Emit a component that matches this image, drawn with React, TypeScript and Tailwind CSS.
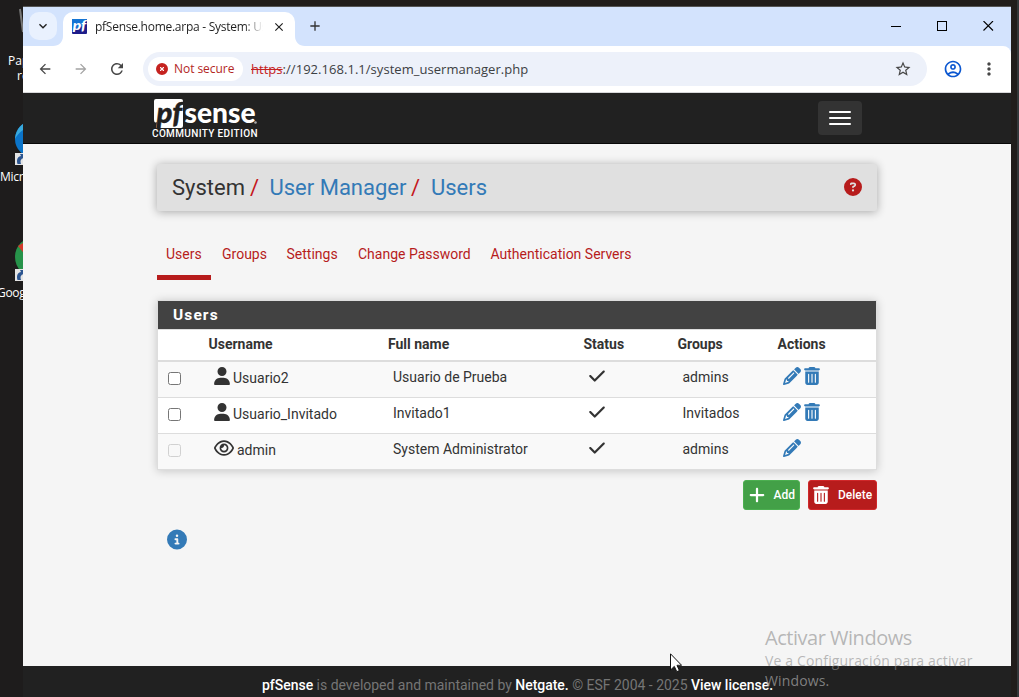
import React from "react";
import {
  FaCheck,
  FaCircleInfo,
  FaCircleQuestion,
  FaCircleXmark,
  FaPencil,
  FaPlus,
  FaRegEye,
  FaTrashCan,
  FaUser,
} from "react-icons/fa6";
import {
  MdAdd,
  MdArrowBack,
  MdArrowForward,
  MdClose,
  MdKeyboardArrowDown,
  MdMoreVert,
  MdOutlineAccountCircle,
  MdRefresh,
  MdStarBorder,
} from "react-icons/md";

type User = {
  username: string;
  fullName: string;
  group: string;
  system?: boolean;
};

const users: User[] = [
  { username: "Usuario2", fullName: "Usuario de Prueba", group: "admins" },
  { username: "Usuario_Invitado", fullName: "Invitado1", group: "Invitados" },
  { username: "admin", fullName: "System Administrator", group: "admins", system: true },
];

function ShortcutBadge() {
  return (
    <svg viewBox="0 0 12 12" className="h-3 w-3">
      <rect width="12" height="12" fill="#e4e4e4" />
      <path d="M2.5 11C1 6 3 3.5 6 3L5 1h6v6L8.5 5C5.5 6 5 8 6 11Z" fill="#2c5590" />
    </svg>
  );
}

function Desktop() {
  return (
    <div className="relative h-full w-[23px] shrink-0 overflow-hidden bg-[#1e1c1c] text-[12px] leading-4 whitespace-nowrap text-white">
      <svg className="absolute top-1 left-[19px]" width="20" height="30" viewBox="0 0 20 30">
        <path d="M1 5 L4 28" stroke="#777" strokeWidth="2" />
        <ellipse cx="17" cy="3" rx="4" ry="2" fill="#555" />
      </svg>
      <span className="absolute top-[53px] left-2">Papelera</span>
      <span className="absolute top-[68px] left-[17px]">reciclaje</span>
      <svg className="absolute top-[121px] left-[15px]" width="36" height="36" viewBox="0 0 36 36">
        <circle cx="18" cy="18" r="18" fill="#0b74c9" />
        <path d="M0 18C1 7 8 0 18 0V6C9 6 3 12 0 18Z" fill="#39a9dc" />
      </svg>
      <div className="absolute top-[153px] left-[15px]"><ShortcutBadge /></div>
      <span className="absolute top-[169px] left-0 tracking-[-0.3px]">Microsoft</span>
      <svg className="absolute top-[237px] left-[15px]" width="40" height="40" viewBox="0 0 40 40">
        <circle cx="20" cy="20" r="20" fill="#27934a" />
        <path d="M3 9L20 -1V30Z" fill="#d33a2c" />
      </svg>
      <div className="absolute top-[269px] left-[15px]"><ShortcutBadge /></div>
      <span className="absolute top-[285px] -left-[3px] tracking-[-0.3px]">Google</span>
    </div>
  );
}

function Favicon() {
  return (
    <svg className="h-[15px] w-[15px] shrink-0" viewBox="0 0 15 15">
      <rect width="15" height="15" rx="1" fill="#1d1d8a" />
      <path d="M0 0H15L11 7L0 11Z" fill="#1475d4" />
      <text x="0.7" y="11" fontFamily="Lato" fontWeight="900" fontStyle="italic" fontSize="12.5" fill="#fff" textLength="13.5" lengthAdjust="spacingAndGlyphs">pf</text>
    </svg>
  );
}

function TabStrip() {
  return (
    <div className="flex h-[39px] bg-[#d3e3fd] pt-[5px] pl-[6px]">
      <div className="flex h-7 w-7 shrink-0 items-center justify-center rounded-[10px] bg-[#e9f1fe]">
        <MdKeyboardArrowDown className="h-4 w-4 text-[#1f1f1f]" />
      </div>
      <svg className="mt-[24px] ml-[-4px] h-[10px] w-[10px] shrink-0" viewBox="0 0 10 10">
        <path d="M10 0V10H0C6 10 10 6 10 0Z" fill="#fff" />
      </svg>
      <div className="flex h-[34px] w-[232px] shrink-0 items-center rounded-t-[10px] bg-white pr-2 pb-[5px] pl-[9px]">
        <Favicon />
        <div className="ml-[8px] w-[168px] overflow-hidden bg-linear-to-r from-[#1f1f1f] from-89% to-transparent bg-clip-text text-[12px] tracking-[-0.26px] whitespace-nowrap text-transparent">
          pfSense.home.arpa - System: User
        </div>
        <MdClose className="ml-[9px] h-[14px] w-[14px] shrink-0 text-[#1f1f1f]" />
      </div>
      <svg className="mt-[24px] h-[10px] w-[10px] shrink-0" viewBox="0 0 10 10">
        <path d="M0 0V10H10C4 10 0 6 0 0Z" fill="#fff" />
      </svg>
      <MdAdd className="mt-[6px] ml-[2px] h-4 w-4 shrink-0 text-[#333]" />
      <div className="ml-auto flex items-start gap-9 pt-[9px] pr-[17px]">
        <svg className="h-[10px] w-[10px]" viewBox="0 0 10 10"><path d="M0 5.5H10" stroke="#000" /></svg>
        <svg className="h-[10px] w-[10px]" viewBox="0 0 10 10"><rect x=".5" y=".5" width="9" height="9" fill="none" stroke="#000" /></svg>
        <svg className="h-[10px] w-[11px]" viewBox="0 0 11 10"><path d="M.5 0L10 9.5M10 0L.5 9.5" stroke="#000" strokeWidth="1.1" /></svg>
      </div>
    </div>
  );
}

function Toolbar() {
  return (
    <div className="bg-[#d3e3fd]">
      <div className="flex h-[47px] items-center rounded-tr-lg border-b border-[#d8d8da] bg-white pl-[14px]">
        <MdArrowBack className="h-4 w-4 text-[#474747]" />
        <MdArrowForward className="ml-5 h-4 w-4 text-[#a3a3a3]" />
        <MdRefresh className="ml-[19px] h-[18px] w-[18px] text-[#474747]" />
        <div className="ml-[17px] flex h-[34px] w-[784px] items-center rounded-full bg-[#edf1fa] pl-[5px]">
          <div className="flex h-6 w-[95px] items-center rounded-full bg-white pl-2">
            <FaCircleXmark className="h-3 w-3 text-[#c5221f]" />
            <span className="ml-[6px] text-[12px] tracking-[-0.05px] whitespace-nowrap text-[#b3261e]">Not secure</span>
          </div>
          <div className="ml-2 pt-[2px] text-[13px] tracking-[0.04px] whitespace-nowrap text-[#3c4043]">
            <span className="text-[#c5221f] line-through">https</span>://192.168.1.1/system_usermanager.php
          </div>
          <MdStarBorder className="mr-[15px] ml-auto h-[18px] w-[18px] text-[#474747]" />
        </div>
        <MdOutlineAccountCircle className="ml-[16px] h-5 w-5 text-[#0b57d0]" />
        <MdMoreVert className="ml-[16px] h-5 w-5 text-[#474747]" />
      </div>
    </div>
  );
}

function Logo() {
  return (
    <svg className="block h-[42px] w-[108px]" viewBox="0 0 108 42">
      <path d="M4 2H29Q31 2 31 4V29Q31 31 29 31H4L5 25Q2 27 2 22V4Q2 2 4 2Z" fill="#fff" />
      <text x="4.5" y="25.5" fontFamily="Lato" fontWeight="900" fontStyle="italic" fontSize="28" fill="#212121" stroke="#212121" strokeWidth="0.4" textLength="25.5" lengthAdjust="spacingAndGlyphs">pf</text>
      <text x="32.5" y="26" fontFamily="Lato" fontWeight="900" fontSize="28" fill="#fff" textLength="71" lengthAdjust="spacingAndGlyphs">sense</text>
      <circle cx="103.5" cy="25.5" r="1.3" fill="#aaa" />
      <text x="0" y="40" fontFamily="Roboto" fontWeight="500" fontSize="10" fill="#fff" textLength="105.5">COMMUNITY EDITION</text>
    </svg>
  );
}

function Navbar() {
  return (
    <div className="flex h-[51px] items-start border-b border-[#080808] bg-[#212121] pr-[149px] pl-[129px]">
      <div className="mt-1"><Logo /></div>
      <div className="mt-2 ml-auto flex h-[34px] w-11 flex-col items-center justify-center gap-1 rounded-[4px] bg-[#333]">
        <span className="h-[2px] w-[22px] rounded-[1px] bg-white" />
        <span className="h-[2px] w-[22px] rounded-[1px] bg-white" />
        <span className="h-[2px] w-[22px] rounded-[1px] bg-white" />
      </div>
    </div>
  );
}

function Breadcrumb() {
  return (
    <div className="flex h-[47px] items-center rounded-[2px] bg-[#e0e0e0] pr-[15px] pl-[15px] text-[22px] whitespace-nowrap text-[#337ab7] shadow-[0_1px_10px_rgba(0,0,0,0.32)]">
      <span className="w-[78px] text-[#333]">System</span>
      <span className="w-[19.5px] text-[#c5161b]">/</span>
      <span className="w-[141.5px]">User Manager</span>
      <span className="w-[20px] text-[#c5161b]">/</span>
      <span>Users</span>
      <FaCircleQuestion className="mb-px ml-auto h-[18px] w-[18px] text-[#b71c1c]" />
    </div>
  );
}

function Tabs() {
  return (
    <div className="mt-[33px] flex h-[36px] gap-[2px] text-[14px] leading-5 whitespace-nowrap text-[#b71c1c]">
      <span className="w-[54px] border-b-[5px] border-[#b71c1c] pl-[9px]">Users</span>
      <span className="w-[63px] pl-[9px]">Groups</span>
      <span className="w-[69px] pl-[8.5px]">Settings</span>
      <span className="w-[130px] pl-[9px]">Change Password</span>
      <span className="pl-[9.5px]">Authentication Servers</span>
    </div>
  );
}

const columns = "grid grid-cols-[50.5px_179.5px_195.5px_94px_100px_1fr]";

function UserRow({ user }: { user: User }) {
  return (
    <div className={`${columns} h-9 border-b border-[#ddd] odd:bg-[#f9f9f9] even:bg-white`}>
      <div className="pt-[10px] pl-[10px]">
        <div className={`h-[13px] w-[13px] rounded-[2.5px] border ${user.system ? "border-[#d1d1d1] bg-[#f8f8f8]" : "border-[#767676] bg-white"}`} />
      </div>
      <div className="flex pt-[5px] pl-[5px]">
        {user.system ? <FaRegEye className="h-[18px] w-[20px]" /> : <FaUser className="h-[18px] w-4" />}
        <span className="ml-[3.5px] pt-px">{user.username}</span>
      </div>
      <div className="pt-[5px] pl-[5px]">{user.fullName}</div>
      <div className="pt-[5px] pl-[5px]"><FaCheck className="h-[18px] w-4" /></div>
      <div className="pt-[5px] pl-[5px]">{user.group}</div>
      <div className="flex gap-[3px] pt-[5px] pl-[5px] text-[#337ab7]">
        <FaPencil className="h-[18px] w-[18px]" />
        {!user.system && <FaTrashCan className="h-[18px] w-4" />}
      </div>
    </div>
  );
}

function UsersPanel() {
  return (
    <div className="mt-[20px] border border-b-0 border-[#ddd] bg-white text-[14px] leading-5 whitespace-nowrap text-[#333] shadow-[0_1px_9px_rgba(0,0,0,0.2)]">
      <div className="h-[28px] bg-[#424242] pt-1 pl-[15px] text-[15.5px] font-bold tracking-[1.1px] text-white">Users</div>
      <div className={`${columns} h-[33px] border-t border-b-2 border-t-[#ddd] border-b-[#ddd] pt-1 font-bold`}>
        <span />
        <span>Username</span>
        <span>Full name</span>
        <span>Status</span>
        <span>Groups</span>
        <span>Actions</span>
      </div>
      <div>{users.map((u) => <UserRow key={u.username} user={u} />)}</div>
    </div>
  );
}

function Cursor() {
  return (
    <svg className="absolute top-[653px] left-[670px] h-5 w-3" viewBox="0 0 12 20">
      <path d="M.5 .8V17L4.3 13.4L6.8 18.7L9.4 17.5L7 12.3H11.6Z" fill="#fff" stroke="#111" strokeWidth="1" />
    </svg>
  );
}

export default function App() {
  return (
    <div className="relative flex h-[697px] w-[1019px] overflow-hidden bg-[#211d1b] font-['Open_Sans','Noto_Sans',sans-serif]">
      <Desktop />
      <div className="mt-[6px] flex w-[988px] shrink-0 flex-col border-t border-[#555]">
        <TabStrip />
        <Toolbar />
        <div className="flex min-h-0 flex-1 flex-col font-['Roboto',sans-serif]">
          <Navbar />
          <main className="min-h-0 flex-1 bg-[#f5f5f5] pt-5 pr-[134px] pl-[134px]">
            <Breadcrumb />
            <Tabs />
            <UsersPanel />
            <div className="mt-[10px] flex justify-end gap-2 text-[12px] font-medium text-white">
              <button className="flex h-[30px] w-[57px] items-center rounded-[3px] border border-[#4caf50] bg-[#43a047] pl-[4.5px]">
                <FaPlus className="h-[18px] w-4" />
                <span className="ml-[9px]">Add</span>
              </button>
              <button className="flex h-[30px] w-[69px] items-center rounded-[3px] border border-[#d0282a] bg-[#b71c1c] pl-1">
                <FaTrashCan className="h-[18px] w-4" />
                <span className="ml-[9px]">Delete</span>
              </button>
            </div>
            <FaCircleInfo className="mt-[19px] ml-[10px] h-[21px] w-5 text-[#337ab7]" />
          </main>
          <footer className="h-[31px] bg-[#212121] pt-[9px] pl-[239px] text-[14px] leading-5 tracking-[-0.02px] whitespace-nowrap text-[#757575]">
            <b className="font-medium text-white">pfSense</b> is developed and maintained by{" "}
            <b className="font-medium text-white">Netgate.</b> © ESF 2004 - 2025{" "}
            <b className="font-medium text-white">View license.</b>
          </footer>
        </div>
      </div>
      <div className="ml-auto h-full w-[2px] bg-[#34383a]" />
      <div className="absolute top-[625px] left-[765px] whitespace-nowrap text-[#8c8c8c]/60">
        <div className="text-[20px] leading-[26px] tracking-[-0.48px]">Activar Windows</div>
        <div className="text-[14px] leading-5 tracking-[0.15px]">Ve a Configuración para activar</div>
        <div className="text-[14px] leading-5 tracking-[0.15px] text-[#999]/80">Windows.</div>
      </div>
      <Cursor />
    </div>
  );
}
